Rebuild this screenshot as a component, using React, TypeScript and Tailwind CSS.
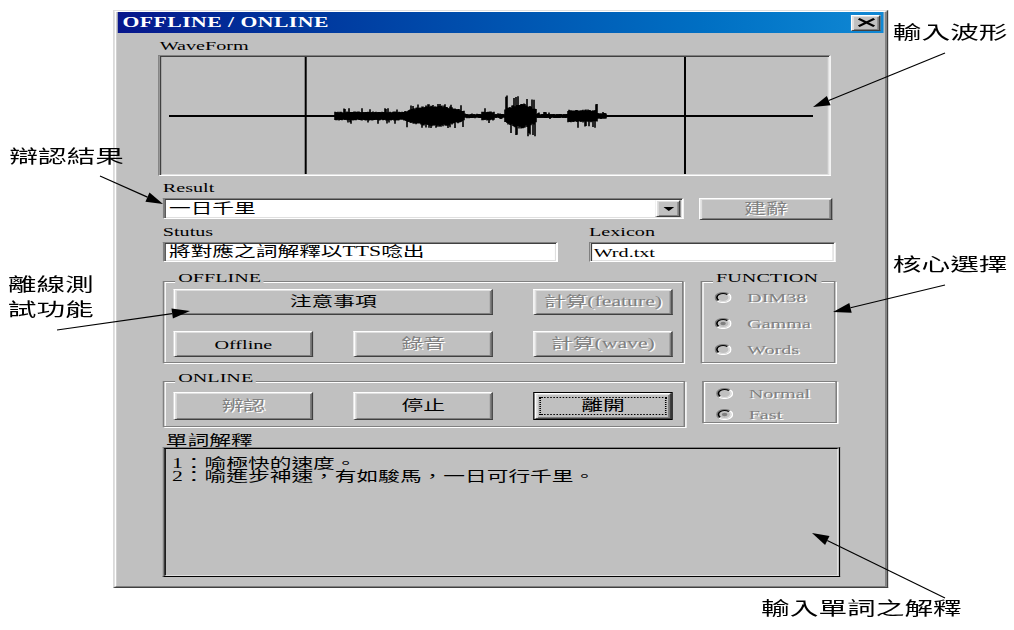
import React from "react";

// Classic 3D edge styles
const raised =
  "border border-t-white border-l-white border-r-[#404040] border-b-[#404040] shadow-[inset_1px_1px_0_#dfdfdf,inset_-1px_-1px_0_#808080]";
const sunken =
  "border border-t-[#808080] border-l-[#808080] border-r-white border-b-white shadow-[inset_1px_1px_0_#404040,inset_-1px_-1px_0_#dfdfdf]";
const etched = "border border-[#808080] shadow-[inset_1px_1px_0_#ffffff,1px_1px_0_#ffffff]";
const grayed = "text-[#808080] [text-shadow:1px_1px_0_#ffffff]";

// Deterministic noise for the recorded signal
function makeRand(seed: number) {
  let s = seed;
  return () => {
    s = (s * 1103515245 + 12345) & 0x7fffffff;
    return s / 0x7fffffff;
  };
}

function envelope(x: number): [number, number] {
  if (x < 335) return [0, 0];
  if (x < 405) return [3.5, 7];
  if (x < 465) {
    const t = (x - 405) / 60;
    return [4 + 6.5 * Math.sin(Math.PI * t), 11];
  }
  if (x < 482) return [1, 1.5];
  if (x < 495) return [3.5, 7];
  if (x < 505) return [1, 2];
  if (x < 537) {
    const t = (x - 505) / 32;
    return [6 + 6 * Math.sin(Math.PI * t), 20];
  }
  if (x < 568) return [1, 3];
  if (x < 598) return [5.5, 12];
  if (x < 607) return [2, 3];
  return [0, 0];
}

const X0 = 159.65;
const Y0 = 56;

const WAVE_PATH = (() => {
  const rnd = makeRand(11);
  let d = "";
  for (let x = 335; x <= 607; x++) {
    const [base, spike] = envelope(x);
    let up = base * (0.75 + 0.25 * rnd());
    let dn = base * (0.75 + 0.25 * rnd());
    if (rnd() < 0.15) up = base + (spike - base) * (0.5 + 0.5 * rnd());
    if (rnd() < 0.15) dn = base + (spike - base) * (0.5 + 0.5 * rnd());
    const px = x - X0;
    d += `M${px.toFixed(2)} ${(116 - Y0 - up - 1).toFixed(1)}V${(116 - Y0 + dn + 1).toFixed(1)}`;
  }
  return d;
})();

function WavePlot() {
  return (
    <svg viewBox="0 0 669.6 119" preserveAspectRatio="none" className="w-full h-full block">
      <line x1={169 - X0} y1={116 - Y0} x2={813 - X0} y2={116 - Y0} stroke="#000" strokeWidth="2" />
      <line x1={305.7 - X0} y1="1" x2={305.7 - X0} y2="118" stroke="#000" strokeWidth="2" />
      <line x1={685 - X0} y1="1" x2={685 - X0} y2="118" stroke="#000" strokeWidth="2" />
      <path d={WAVE_PATH} stroke="#000" strokeWidth="1.6" fill="none" />
    </svg>
  );
}

function Btn({
  label,
  disabled,
  className = "",
  textClass = "text-[14px]",
}: {
  label: string;
  disabled?: boolean;
  className?: string;
  textClass?: string;
}) {
  return (
    <div className={`flex items-center justify-center bg-[#c0c0c0] ${raised} ${className}`}>
      <span className={`leading-none whitespace-nowrap ${textClass} ${disabled ? grayed : "text-black"}`}>
        {label}
      </span>
    </div>
  );
}

function Radio({ label, checked }: { label: string; checked?: boolean }) {
  return (
    <div className="flex items-center h-[16px] gap-[10px]">
      <svg width="11" height="11" viewBox="0 0 11 11" className="shrink-0">
        <circle cx="5.5" cy="5.5" r="5" fill="#c0c0c0" />
        <path d="M1.96 9.04 A5 5 0 0 1 9.04 1.96" stroke="#808080" strokeWidth="1.1" fill="none" />
        <path d="M9.04 1.96 A5 5 0 0 1 1.96 9.04" stroke="#ffffff" strokeWidth="1.1" fill="none" />
        <path d="M2.67 8.33 A4 4 0 0 1 8.33 2.67" stroke="#000000" strokeWidth="1.1" fill="none" />
        <path d="M8.33 2.67 A4 4 0 0 1 2.67 8.33" stroke="#dfdfdf" strokeWidth="1.1" fill="none" />
        {checked && <circle cx="5.5" cy="5.5" r="1.8" fill="#808080" />}
      </svg>
      <span className={`text-[13px] leading-[13px] ${grayed}`}>{label}</span>
    </div>
  );
}

function Group({
  label,
  className = "",
  children,
}: {
  label?: string;
  className?: string;
  children: React.ReactNode;
}) {
  return (
    <div className={`flex flex-col ${etched} ${className}`}>
      {label && (
        <span className="self-start -mt-[11px] ml-[7px] px-[2px] bg-[#c0c0c0] text-[13px] leading-[13px] text-black">
          {label}
        </span>
      )}
      {children}
    </div>
  );
}

function TitleBar() {
  return (
    <div className="h-[21px] flex items-center justify-between pl-[3px] pr-[2px] bg-linear-to-r from-[#08168c] to-[#1088d4]">
      <span className="text-white font-bold text-[14px] leading-none tracking-[0.3px]">OFFLINE / ONLINE</span>
      <div className={`w-[19px] h-[16px] flex items-center justify-center bg-[#c0c0c0] ${raised}`}>
        <svg width="12" height="9" viewBox="0 0 12 9">
          <path d="M1 0.8 L11 8.2 M11 0.8 L1 8.2" stroke="#000" strokeWidth="2" />
        </svg>
      </div>
    </div>
  );
}

function Dialog() {
  return (
    <div className="w-[500px] h-[578px] flex flex-col bg-[#c0c0c0] border border-t-[#dfdfdf] border-l-[#dfdfdf] border-r-[#404040] border-b-[#404040]">
      <div className="flex flex-col flex-1 border border-t-white border-l-white border-r-[#808080] border-b-[#808080] px-px">
        <TitleBar />
        <div className="flex flex-col pl-[26px] text-black">
          <div className="mt-[6px] ml-[1px] h-[13px] text-[13px] leading-[13px]">WaveForm</div>
          <div className={`mt-[3px] w-[434px] h-[121px] bg-[#c0c0c0] ${sunken}`}>
            <WavePlot />
          </div>

          <div className="mt-[5px] ml-[3px] h-[13px] text-[13px] leading-[13px]">Result</div>
          <div className="mt-[4px] ml-[3px] flex items-start gap-[10px]">
            <div className={`w-[336px] h-[21px] bg-white flex items-center ${sunken}`}>
              <span className="flex-1 pl-[3px] text-[14px] leading-none">一日千里</span>
              <div className={`mr-px w-[16px] h-[17px] flex items-center justify-center bg-[#c0c0c0] ${raised}`}>
                <svg width="7" height="4" viewBox="0 0 7 4">
                  <polygon points="0,0 7,0 3.5,4" fill="#000" />
                </svg>
              </div>
            </div>
            <Btn label="建辭" disabled className="w-[86px] h-[22px]" />
          </div>

          <div className="mt-[5px] ml-[3px] flex gap-[20px] h-[13px] text-[13px] leading-[13px]">
            <span className="w-[255px]">Stutus</span>
            <span>Lexicon</span>
          </div>
          <div className="mt-[4px] ml-[3px] flex gap-[20px]">
            <div className={`w-[255px] h-[20px] bg-white flex items-center pl-[3px] ${sunken}`}>
              <span className="text-[14px] leading-none whitespace-nowrap">將對應之詞解釋以TTS唸出</span>
            </div>
            <div className={`w-[159px] h-[20px] bg-white flex items-center pl-[2px] ${sunken}`}>
              <span className="text-[13px] leading-none">Wrd.txt</span>
            </div>
          </div>

          <div className="mt-[19px] ml-[3px] flex items-start gap-[11px]">
            <Group label="OFFLINE" className="w-[336px] h-[82px]">
              <div className="mt-[5px] ml-[6px] grid grid-cols-[90px_90px_90px] gap-x-[26px] gap-y-[16px]">
                <Btn label="注意事項" className="col-span-2 h-[26px]" />
                <Btn label="計算(feature)" disabled className="h-[26px]" />
                <Btn label="Offline" className="h-[26px]" textClass="text-[13px]" />
                <Btn label="錄音" disabled className="h-[26px]" />
                <Btn label="計算(wave)" disabled className="h-[26px]" />
              </div>
            </Group>
            <Group label="FUNCTION" className="w-[87px] h-[82px]">
              <div className="mt-[5px] ml-[8px] flex flex-col gap-[10px]">
                <Radio label="DIM38" />
                <Radio label="Gamma" checked />
                <Radio label="Words" />
              </div>
            </Group>
          </div>

          <div className="mt-[18px] ml-[3px] flex items-start gap-[11px]">
            <Group label="ONLINE" className="w-[337px] h-[46px]">
              <div className="mt-[8px] ml-[6px] grid grid-cols-[90px_90px_90px] gap-x-[26px]">
                <Btn label="辨認" disabled className="h-[28px]" />
                <Btn label="停止" className="h-[28px]" />
                <div className="h-[28px] flex border border-black">
                  <div className={`flex-1 flex px-[2px] py-[3px] bg-[#c0c0c0] ${raised}`}>
                    <div className="flex-1 flex items-center justify-center border border-dotted border-black">
                      <span className="text-[14px] leading-none">離開</span>
                    </div>
                  </div>
                </div>
              </div>
            </Group>
            <Group className="w-[87px] h-[42px]">
              <div className="mt-[3px] ml-[8px] flex flex-col gap-[5px]">
                <Radio label="Normal" />
                <Radio label="Fast" checked />
              </div>
            </Group>
          </div>

          <div className="mt-[7px] ml-[5px] h-[13px] text-[14px] leading-[14px]">單詞解釋</div>
          <div className="ml-[3px] w-[437px] h-[130px] flex border border-t-[#808080] border-l-[#808080] border-r-black border-b-black">
            <div className="flex-1 flex flex-col pt-[8px] pl-[4px] border border-t-black border-l-black border-r-[#dfdfdf] border-b-[#dfdfdf] bg-[#c0c0c0] text-[14px] leading-[13px]">
              <span>1：喻極快的速度。</span>
              <span>2：喻進步神速，有如駿馬，一日可行千里。</span>
            </div>
          </div>
        </div>
      </div>
    </div>
  );
}

function Arrow({ from, tip, head = 17, half = 5 }: { from: [number, number]; tip: [number, number]; head?: number; half?: number }) {
  const dx = tip[0] - from[0];
  const dy = tip[1] - from[1];
  const len = Math.hypot(dx, dy);
  const ux = dx / len;
  const uy = dy / len;
  const bx = tip[0] - ux * head;
  const by = tip[1] - uy * head;
  const nx = -uy;
  const ny = ux;
  const pts = `${tip[0]},${tip[1]} ${bx + nx * half},${by + ny * half} ${bx - nx * half},${by - ny * half}`;
  return (
    <g>
      <line x1={from[0]} y1={from[1]} x2={bx} y2={by} stroke="#000" strokeWidth="1.2" />
      <polygon points={pts} fill="#000" />
    </g>
  );
}

export default function App() {
  return (
    <div className="relative w-[1014px] h-[630px] overflow-hidden bg-white">
      <div className="relative w-[654px] h-[630px] flex flex-col pt-[10px] pl-[73px] origin-top-left scale-x-[1.55] font-['Liberation_Serif','Noto_Sans_CJK_TC',serif]">
        <Dialog />

        {/* callout captions */}
        <span className="absolute left-[576px] top-[22px] text-[18.5px] leading-none font-['Noto_Sans_CJK_TC',sans-serif] text-black">
          輸入波形
        </span>
        <span className="absolute left-[6px] top-[146px] text-[18.5px] leading-none font-['Noto_Sans_CJK_TC',sans-serif] text-black">
          辯認結果
        </span>
        <span className="absolute left-[5px] top-[271px] flex flex-col text-[18.5px] leading-[25px] font-['Noto_Sans_CJK_TC',sans-serif] text-black">
          <span>離線測</span>
          <span>試功能</span>
        </span>
        <span className="absolute left-[576px] top-[254px] text-[18.5px] leading-none font-['Noto_Sans_CJK_TC',sans-serif] text-black">
          核心選擇
        </span>
        <span className="absolute left-[491px] top-[598px] text-[18.5px] leading-none font-['Noto_Sans_CJK_TC',sans-serif] text-black">
          輸入單詞之解釋
        </span>
      </div>

      <svg className="absolute left-0 top-0 pointer-events-none" width="1014" height="630" viewBox="0 0 1014 630">
        <Arrow from={[945, 53]} tip={[813, 107]} />
        <Arrow from={[100, 176]} tip={[163, 204]} />
        <Arrow from={[57, 330]} tip={[190, 311]} head={18} />
        <Arrow from={[945, 285]} tip={[833, 312]} head={18} />
        <Arrow from={[945, 598]} tip={[812, 533]} />
      </svg>
    </div>
  );
}
